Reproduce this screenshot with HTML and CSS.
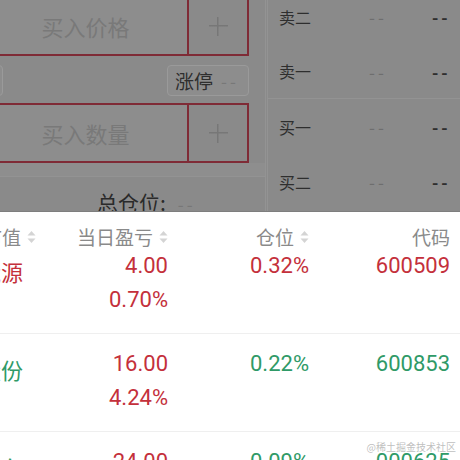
FILE: index.html
```html
<!DOCTYPE html>
<html lang="zh-CN">
<head>
<meta charset="utf-8">
<title>持仓</title>
<link rel="stylesheet" href="styles.css">
</head>
<body>
<div class="screen">
  <div class="top">
    <div class="left">
      <div class="box box-first">
        <div class="box-input">买入价格</div>
        <div class="box-plus"><span class="plus"></span></div>
      </div>
      <div class="limit-row">
        <div class="stub"></div>
        <div class="pill"><span class="pill-label">涨停</span><span class="pill-val">--</span></div>
      </div>
      <div class="box">
        <div class="box-input">买入数量</div>
        <div class="box-plus"><span class="plus"></span></div>
      </div>
      <div class="band"></div>
      <div class="total"><span class="total-label">总仓位:</span><span class="total-val">--</span></div>
    </div>
    <div class="vline"></div>
    <div class="right">
      <div class="quote"><span class="q-label">卖二</span><span class="q-price">--</span><span class="q-vol">--</span></div>
      <div class="quote quote-sep"><span class="q-label">卖一</span><span class="q-price">--</span><span class="q-vol">--</span></div>
      <div class="quote"><span class="q-label">买一</span><span class="q-price">--</span><span class="q-vol">--</span></div>
      <div class="quote"><span class="q-label">买二</span><span class="q-price">--</span><span class="q-vol">--</span></div>
    </div>
  </div>
  <div class="sheet">
    <div class="thead">
      <div class="cell c1"><span>市值</span><svg class="sort" viewBox="0 0 9 14"><polygon points="4.5,1 8.5,5.5 0.5,5.5"/><polygon points="0.5,8.5 8.5,8.5 4.5,13"/></svg></div>
      <div class="cell"><span>当日盈亏</span><svg class="sort" viewBox="0 0 9 14"><polygon points="4.5,1 8.5,5.5 0.5,5.5"/><polygon points="0.5,8.5 8.5,8.5 4.5,13"/></svg></div>
      <div class="cell"><span>仓位</span><svg class="sort" viewBox="0 0 9 14"><polygon points="4.5,1 8.5,5.5 0.5,5.5"/><polygon points="0.5,8.5 8.5,8.5 4.5,13"/></svg></div>
      <div class="cell"><span>代码</span></div>
    </div>
    <div class="trow trow-first red">
      <div class="cell c1 name">天富能源</div>
      <div class="cell stack"><span class="up">4.00</span><span class="up">0.70%</span></div>
      <div class="cell num">0.32%</div>
      <div class="cell num">600509</div>
    </div>
    <div class="trow green">
      <div class="cell c1 name">龙建股份</div>
      <div class="cell stack"><span class="up">16.00</span><span class="up">4.24%</span></div>
      <div class="cell num">0.22%</div>
      <div class="cell num">600853</div>
    </div>
    <div class="trow green">
      <div class="cell c1 name">长安汽车</div>
      <div class="cell stack"><span class="up">24.00</span><span class="up">1.02%</span></div>
      <div class="cell num">0.09%</div>
      <div class="cell num">000625</div>
    </div>
    <div class="watermark">@稀土掘金技术社区</div>
  </div>
</div>
</body>
</html>
```

FILE: styles.css
```css
html, body {
  margin: 0;
  padding: 0;
  width: 460px;
  height: 460px;
  overflow: hidden;
  background: #ffffff;
}

.screen {
  width: 460px;
  height: 460px;
  overflow: hidden;
  font-family: "Noto Sans CJK SC", "Noto Sans", sans-serif;
}

/* dimmed upper part */
.top {
  height: 212px;
  display: flex;
  background: #8a8a8a;
  overflow: hidden;
  border-bottom: 1px solid #7e7e7e;
  box-sizing: border-box;
}

.left {
  width: 265px;
  flex: none;
  display: flex;
  flex-direction: column;
}

.box {
  display: flex;
  margin-left: -10px;
  width: 259px;
  height: 60px;
  margin-top: 7px;
  border: 2px solid #7f2b36;
  box-sizing: border-box;
  background: #8d8d8d;
  flex: none;
}

.box-first {
  margin-top: -4px;
}

.box-input {
  flex: 1;
  display: flex;
  align-items: center;
  justify-content: center;
  padding-right: 8px;
  font-size: 22px;
  color: #797979;
}

.box-plus {
  width: 58px;
  border-left: 2px solid #7f2b36;
  display: flex;
  align-items: center;
  justify-content: center;
  background: #8a8a8a;
}

.plus {
  width: 19px;
  height: 19px;
  background:
    linear-gradient(#777777, #777777) center / 19px 1.5px no-repeat,
    linear-gradient(#777777, #777777) center / 1.5px 19px no-repeat;
}

.limit-row {
  display: flex;
  margin-left: -10px;
  width: 259px;
  height: 31px;
  margin-top: 9px;
  flex: none;
}

.stub {
  width: 11px;
  border: 1px solid #9a9a9a;
  border-radius: 4px;
  background: #8d8d8d;
}

.pill {
  margin-left: auto;
  width: 82px;
  box-sizing: border-box;
  border: 1px solid #9a9a9a;
  border-radius: 4px;
  background: #8d8d8d;
  display: flex;
  align-items: center;
  padding-left: 7px;
  gap: 8px;
}

.pill-label {
  font-size: 19px;
  color: #2e2e2e;
}

.pill-val {
  font-size: 17px;
  color: #787878;
  letter-spacing: 3px;
}

.band {
  height: 13px;
  flex: none;
  background: #8e8e8e;
  border-bottom: 1px solid #939393;
}

.total {
  padding-top: 12px;
  padding-left: 97px;
  display: flex;
  align-items: baseline;
  gap: 12px;
  line-height: 26px;
}

.total-label {
  font-size: 21px;
  color: #2a2a2a;
}

.total-val {
  font-size: 17px;
  color: #777777;
  letter-spacing: 3px;
}

.vline {
  width: 1px;
  flex: none;
  border-left: 1px solid #939393;
  border-right: 1px solid #939393;
}

.right {
  flex: 1;
  margin-top: -11px;
  display: flex;
  flex-direction: column;
}

.quote {
  height: 55px;
  flex: none;
  display: flex;
  align-items: center;
  box-sizing: border-box;
}

.quote-sep {
  border-bottom: 1px solid #939393;
}

.q-label {
  width: 90px;
  padding-left: 11px;
  font-size: 16px;
  color: #2e2e2e;
  flex: none;
}

.q-price {
  width: 63px;
  font-size: 17px;
  color: #6e6e6e;
  letter-spacing: 3px;
  flex: none;
}

.q-vol {
  font-size: 17px;
  color: #2e2e2e;
  letter-spacing: 3px;
  font-weight: bold;
}

/* white list sheet */
.sheet {
  position: relative;
  background: #ffffff;
}

.thead,
.trow {
  display: grid;
  grid-template-columns: 36px 132px 141px 141px;
  padding-right: 10px;
}

.thead {
  padding-top: 12px;
  height: 25px;
  font-size: 19px;
  line-height: 24px;
  color: #8a8a8a;
}

.cell {
  display: flex;
  justify-content: flex-end;
  align-items: center;
  white-space: nowrap;
  overflow: hidden;
}

.thead .cell {
  align-items: center;
  gap: 6px;
}

.sort {
  width: 9px;
  height: 14px;
  flex: none;
  display: block;
  fill: #d4d4d4;
}

.trow {
  height: 98px;
  box-sizing: border-box;
  padding-top: 13px;
  border-bottom: 1px solid #efefef;
  font-family: Roboto, "Noto Sans", sans-serif;
  font-size: 22px;
  line-height: 34px;
  align-items: start;
}

.trow-first {
  height: 85px;
  padding-top: 0;
}

.name {
  font-family: "Noto Sans CJK SC", sans-serif;
  font-size: 22px;
  padding-top: 5px;
  padding-right: 13px;
}

.stack {
  flex-direction: column;
  align-items: flex-end;
}

.num {
  align-items: flex-start;
}

.red .cell { color: #c4303b; }
.green .cell { color: #2f9a67; }
.trow .up { color: #c4303b; }

.watermark {
  position: absolute;
  right: 4px;
  top: 229px;
  font-size: 10px;
  line-height: 12px;
  color: rgba(170, 170, 170, 0.75);
  font-family: "Noto Sans CJK SC", sans-serif;
}
```
